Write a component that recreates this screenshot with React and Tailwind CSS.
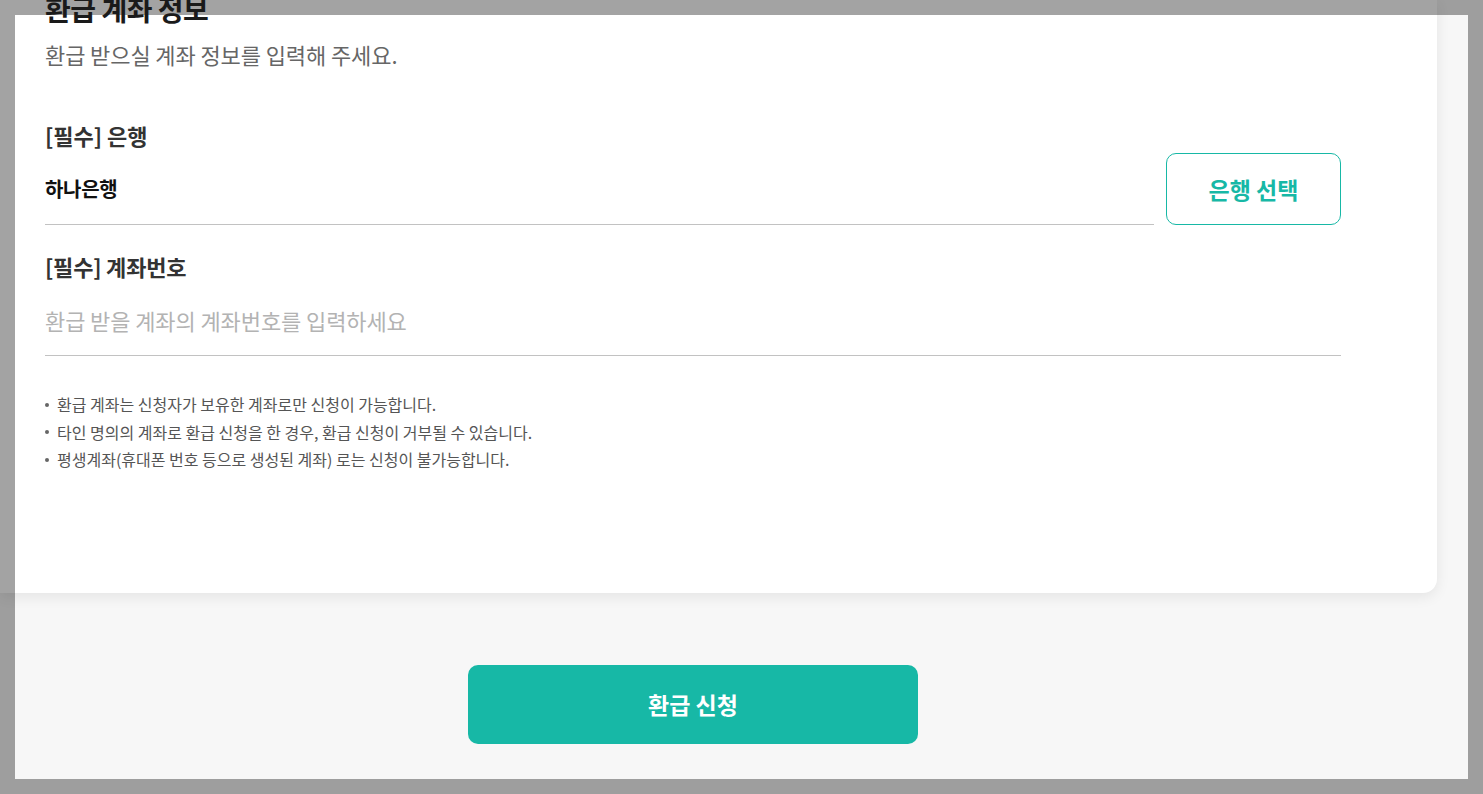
import React, { useState } from 'react';

const notices = [
  '환급 계좌는 신청자가 보유한 계좌로만 신청이 가능합니다.',
  '타인 명의의 계좌로 환급 신청을 한 경우, 환급 신청이 거부될 수 있습니다.',
  '평생계좌(휴대폰 번호 등으로 생성된 계좌) 로는 신청이 불가능합니다.',
];

export default function App() {
  const [account, setAccount] = useState('');

  return (
    <div
      className="relative h-screen w-full overflow-hidden bg-[#f7f7f7]"
      style={{ fontFamily: '"Noto Sans CJK KR", "Noto Sans", sans-serif' }}
    >
      {/* Account card */}
      <div className="flow-root mr-[46px] h-[593px] rounded-br-[14px] bg-white pl-[45px] pr-[96px] shadow-[0_4px_14px_rgba(0,0,0,0.08)]">
        <h1 className="relative z-20 -mt-[9px] h-[36px] text-[28px] font-bold leading-[36px] tracking-[-0.5px] text-[#1a1a1a]">
          환급 계좌 정보
        </h1>
        <p className="mt-[12px] text-[22px] leading-[30px] tracking-[-0.1px] text-[#666]">
          환급 받으실 계좌 정보를 입력해 주세요.
        </p>

        {/* Bank */}
        <div className="mt-[51px] text-[22px] font-bold leading-[30px] text-[#333]">[필수] 은행</div>
        <div className="mt-[3px] flex items-start gap-3">
          <div className="flex h-[72px] flex-1 items-center border-b border-[#c2c2c2] text-[20px] font-bold tracking-[-0.3px] text-[#111]">
            하나은행
          </div>
          <button className="h-[72px] w-[175px] rounded-[10px] border border-[#17b8a6] bg-white text-[23px] font-bold text-[#17b8a6]">
            은행 선택
          </button>
        </div>

        {/* Account number */}
        <div className="mt-[26px] text-[22px] font-bold leading-[30px] tracking-[-0.2px] text-[#333]">[필수] 계좌번호</div>
        <div className="mt-[4px] flex h-[71px] items-center border-b border-[#c2c2c2]">
          <input
            value={account}
            onChange={(e) => setAccount(e.target.value)}
            placeholder="환급 받을 계좌의 계좌번호를 입력하세요"
            className="w-full bg-transparent text-[22px] tracking-[-0.1px] text-[#111] outline-none placeholder:text-[#b3b3b3]"
          />
        </div>

        <ul className="mt-[35px] text-[16px] leading-[27.5px] text-[#555]">
          {notices.map((n) => (
            <li key={n} className="flex items-center">
              <span className="mr-[8px] h-[4px] w-[4px] rounded-full bg-[#666]" />
              <span>{n}</span>
            </li>
          ))}
        </ul>
      </div>

      {/* Submit */}
      <div className="mt-[72px] flex justify-center pl-[45px] pr-[142px]">
        <button className="h-[79px] w-[450px] rounded-[10px] bg-[#17b8a6] text-[23px] font-bold text-white">
          환급 신청
        </button>
      </div>

      {/* Dim frame */}
      <div className="pointer-events-none absolute inset-x-0 top-0 z-10 h-[15px] bg-black/[0.36]" />
      <div className="pointer-events-none absolute bottom-0 left-0 right-0 z-10 h-[15px] bg-black/[0.36]" />
      <div className="pointer-events-none absolute bottom-[15px] left-0 top-[15px] z-10 w-[15px] bg-black/[0.36]" />
      <div className="pointer-events-none absolute bottom-[15px] right-0 top-[15px] z-10 w-[15px] bg-black/[0.36]" />
    </div>
  );
}
